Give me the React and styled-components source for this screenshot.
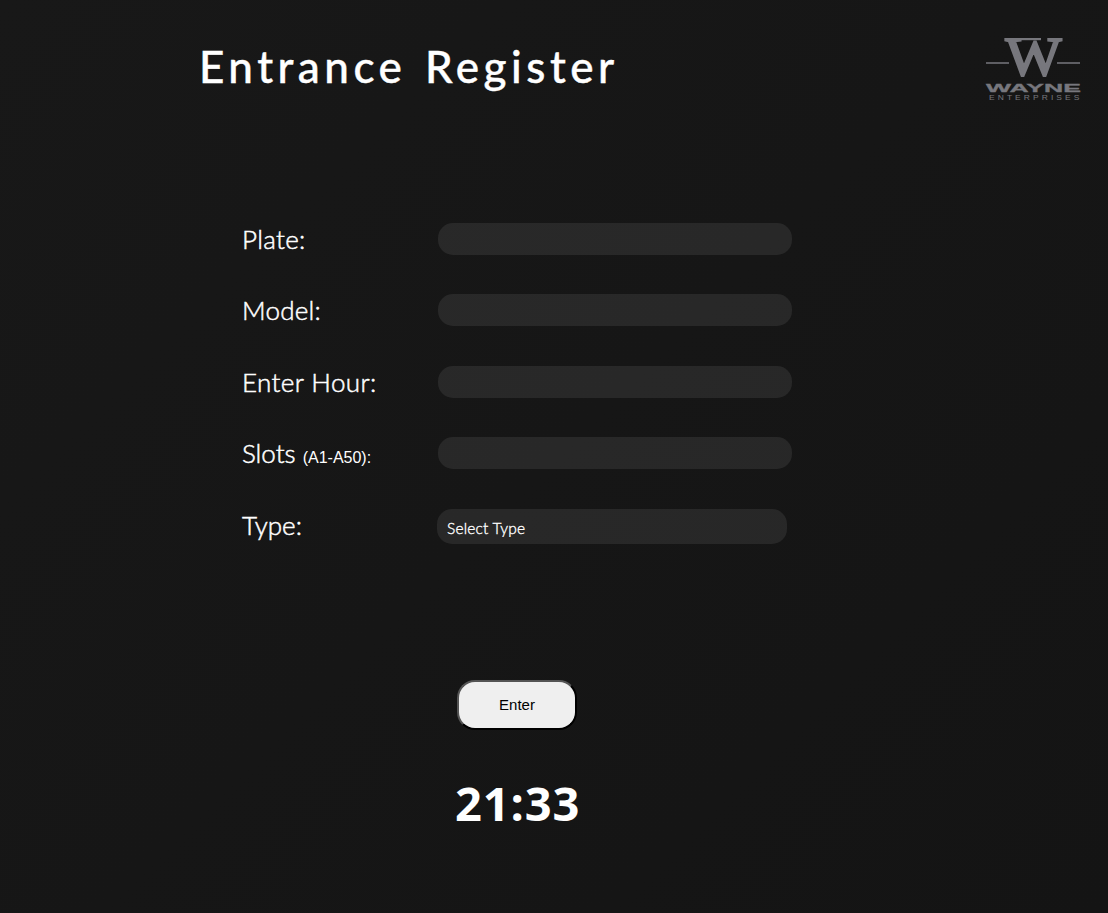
import React from "react";
import styled, { createGlobalStyle } from "styled-components";

const GlobalStyle = createGlobalStyle`
  *, *::before, *::after { box-sizing: border-box; }
  body { margin: 0; background: #161616; }
`;

const Page = styled.main`
  height: 913px;
  overflow: hidden;
  background: linear-gradient(135deg, #181818, #141414);
  color: #fff;
  font-family: Lato, "Liberation Sans", sans-serif;
`;

const Header = styled.header`
  display: flex;
  justify-content: space-between;
  align-items: flex-start;
  height: 223px;
  padding: 36px 24px 0 199px;
`;

const Title = styled.h1`
  margin: 3px 0 0;
  font-size: 44px;
  line-height: 54px;
  font-weight: 500;
  letter-spacing: 4.5px;
  word-spacing: 3px;
  -webkit-text-stroke: 0.4px #fff;
  white-space: nowrap;
`;

const Logo = styled.svg`
  width: 100px;
  height: 68px;
  overflow: visible;
`;

const Form = styled.form`
  padding-left: 242px;
`;

const Row = styled.div`
  display: flex;
  align-items: flex-start;
  height: 71.4px;
`;

const Label = styled.label`
  width: ${(p) => (p.$wide ? 196 : 195)}px;
  font-size: 26px;
  line-height: 32px;
  font-weight: 300;
  letter-spacing: ${(p) => p.$spacing || 0}px;
  -webkit-text-stroke: 0.5px #fff;
  white-space: nowrap;
`;

const Hint = styled.span`
  font-family: "Liberation Sans", Arial, sans-serif;
  font-size: 16px;
  font-weight: 400;
  letter-spacing: 0;
  -webkit-text-stroke: 0;
`;

const Input = styled.input`
  width: 354px;
  height: 32px;
  padding: 0 10px;
  border: 0;
  border-radius: 15px;
  outline: 0;
  background: rgba(255, 255, 255, 0.08);
  color: #fff;
  font: 16px Lato, sans-serif;
`;

const Select = styled.select`
  appearance: none;
  width: 350px;
  height: 35px;
  padding: 4px 10px 0;
  border: 0;
  border-radius: 15px;
  outline: 0;
  background: rgba(255, 255, 255, 0.08);
  color: #fff;
  font: 300 15.5px Lato, sans-serif;
  letter-spacing: 0.2px;
  -webkit-text-stroke: 0.35px #fff;
`;

const Footer = styled.div`
  display: flex;
  flex-direction: column;
  align-items: flex-start;
  padding: 100px 0 0 215px;
`;

const EnterButton = styled.button`
  width: 120px;
  height: 50px;
  padding: 0;
  border: 2px outset #000;
  border-radius: 18px;
  background: #efefef;
  color: #000;
  font: 15px "Liberation Sans", Arial, sans-serif;
`;

const Clock = styled.time`
  margin-top: 41px;
  margin-left: -2px;
  font-family: "Open Sans", "Noto Sans", sans-serif;
  font-size: 47px;
  line-height: 64px;
  font-weight: 700;
  letter-spacing: 0.9px;
`;

const fields = [
  { id: "plate", text: "Plate:", spacing: 0.3 },
  { id: "model", text: "Model:", spacing: 0.25 },
  { id: "hour", text: "Enter Hour:", spacing: 0.4 },
  { id: "slot", text: "Slots ", hint: "(A1-A50):", spacing: 0 },
];

function WayneLogo() {
  return (
    <Logo viewBox="0 0 100 68" fill="#77777d" aria-label="Wayne Enterprises">
      <path d="M2 26h23v2H2zM73 26h23v2H73z" opacity="0.75" />
      <path d="M37 2h20v2.2H37z" />
      <text x="21.5" y="39" fontFamily="Liberation Serif, serif" fontSize="55" stroke="#77777d" strokeWidth="2.2" textLength="56" lengthAdjust="spacingAndGlyphs">W</text>
      <text x="2" y="55.5" fontFamily="Liberation Sans, sans-serif" fontWeight="700" fontSize="11.5" stroke="#77777d" strokeWidth="0.3" textLength="95" lengthAdjust="spacingAndGlyphs">WAYNE</text>
      <g transform="translate(5 64) scale(1.3 1)">
        <text fontFamily="Liberation Sans, sans-serif" fontSize="6.5" textLength="69.5">ENTERPRISES</text>
      </g>
    </Logo>
  );
}

export default function App() {
  return (
    <Page>
      <GlobalStyle />
      <Header>
        <Title>Entrance Register</Title>
        <WayneLogo />
      </Header>
      <Form onSubmit={(e) => e.preventDefault()}>
        {fields.map((f) => (
          <Row key={f.id}>
            <Label htmlFor={f.id} $wide $spacing={f.spacing}>
              {f.text}
              {f.hint && <Hint>{f.hint}</Hint>}
            </Label>
            <Input id={f.id} />
          </Row>
        ))}
        <Row>
          <Label htmlFor="type">Type:</Label>
          <Select id="type">
            <option>Select Type</option>
          </Select>
        </Row>
        <Footer>
          <EnterButton>Enter</EnterButton>
          <Clock>21:33</Clock>
        </Footer>
      </Form>
    </Page>
  );
}
